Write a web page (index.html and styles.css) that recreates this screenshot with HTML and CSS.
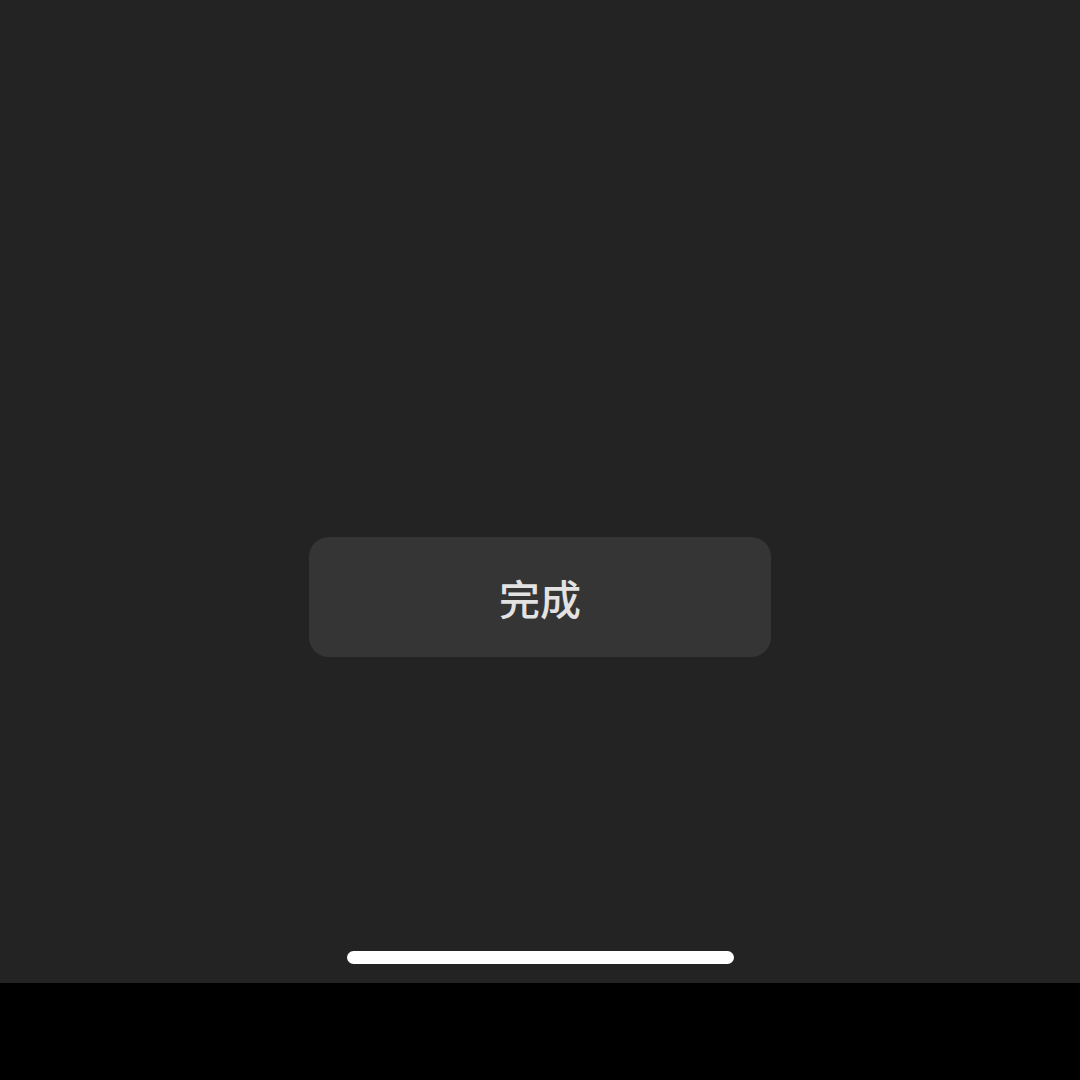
FILE: index.html
```html
<!DOCTYPE html>
<html lang="zh-CN">
<head>
<meta charset="utf-8">
<title>完成</title>
<link rel="stylesheet" href="styles.css">
</head>
<body>
<div class="screen">
  <button class="done-btn">完成</button>
  <div class="spacer"></div>
  <div class="home-indicator"></div>
</div>
<div class="bottom-bar"></div>
</body>
</html>
```
FILE: styles.css
```css
html, body {
  margin: 0;
  padding: 0;
  background: #000;
}
body {
  width: 1080px;
  height: 1080px;
  overflow: hidden;
  font-family: "Noto Sans CJK SC", "Noto Sans", sans-serif;
}
.screen {
  height: 983px;
  background: #232323;
  display: flex;
  flex-direction: column;
  align-items: center;
  padding-top: 537px;
  box-sizing: border-box;
}
.done-btn {
  width: 462px;
  height: 120px;
  border: none;
  border-radius: 20px;
  background: #353535;
  color: #e2e2e2;
  font-family: "Noto Sans CJK SC", sans-serif;
  font-size: 41px;
  font-weight: 500;
  padding: 0;
  line-height: 1;
  display: flex;
  align-items: center;
  justify-content: center;
}
.spacer {
  flex: 1;
}
.home-indicator {
  width: 387px;
  height: 13px;
  border-radius: 7px;
  background: #fff;
  margin-bottom: 19px;
}
.bottom-bar {
  height: 97px;
  background: #000;
}
```
